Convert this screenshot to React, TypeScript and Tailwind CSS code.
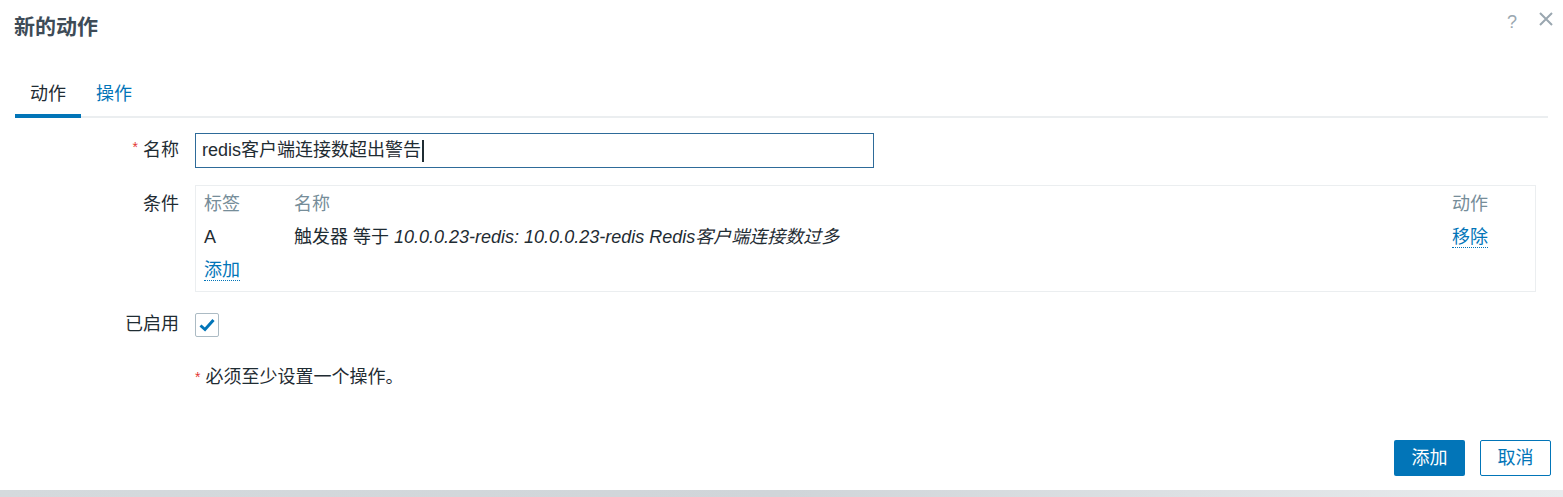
import React from 'react'

const font = { fontFamily: '"Liberation Sans", "Noto Sans CJK SC", sans-serif' }

function Label({ children, required }: { children: React.ReactNode; required?: boolean }) {
  return (
    <div className="w-[195px] shrink-0 pr-[16px] text-right text-[18px] text-[#1f2c33]">
      {required && <span className="mr-[5px] text-[14px] text-[#e33734] align-top">*</span>}
      {children}
    </div>
  )
}

export default function App() {
  return (
    <div style={font} className="flex h-[497px] w-[1563px] flex-col bg-white text-[#1f2c33]">
      {/* Header */}
      <div className="flex items-start justify-between pl-[14px] pr-[10px] pt-[12px]">
        <h1 className="text-[21px] font-bold leading-[30px] text-[#3e4b57]">新的动作</h1>
        <div className="flex items-center gap-[22px] text-[#9aa7b0]">
          <span className="pt-[6px] text-[18px] leading-[4px]">?</span>
          <svg width="14" height="14" viewBox="0 0 14 14">
            <path d="M1 1 L13 13 M13 1 L1 13" stroke="#9aa7b0" strokeWidth="2" />
          </svg>
        </div>
      </div>

      {/* Tabs */}
      <div className="mx-[15px] mt-[40px] flex border-b-2 border-[#ebeef0]">
        <div className="relative -mb-[2px] w-[66px] border-b-4 border-[#0275b8] pb-[8px] text-center text-[18px] leading-[24px] text-[#1f2c33]">
          动作
        </div>
        <div className="ml-[15px] text-[18px] leading-[24px] text-[#0275b8]">操作</div>
      </div>

      {/* Form */}
      <div className="mt-[15px] flex flex-col">
        <div className="flex items-center">
          <Label required>名称</Label>
          <div className="flex h-[35px] w-[679px] items-center border border-[#2e6b99] px-[6px] text-[18px]">
            redis客户端连接数超出警告
            <span className="ml-[1px] inline-block h-[22px] w-[2px] bg-[#1f2c33]" />
          </div>
        </div>

        <div className="mt-[17px] flex items-start">
          <div className="pt-[6px]">
            <Label>条件</Label>
          </div>
          <div className="h-[107px] w-[1341px] border border-[#ebeef0] px-[8px] pt-[5px] text-[18px]">
            <div className="flex leading-[26px] text-[#768d99]">
              <div className="w-[90px]">标签</div>
              <div className="flex-1">名称</div>
              <div className="w-[75px]">动作</div>
            </div>
            <div className="mt-[7px] flex leading-[26px]">
              <div className="w-[90px]">A</div>
              <div className="flex-1">
                触发器 等于 <i>10.0.0.23-redis: 10.0.0.23-redis Redis客户端连接数过多</i>
              </div>
              <div className="w-[75px]">
                <span className="border-b border-dotted border-[#0275b8] text-[#0275b8]">移除</span>
              </div>
            </div>
            <div className="mt-[7px] leading-[26px]">
              <span className="border-b border-dotted border-[#0275b8] text-[#0275b8]">添加</span>
            </div>
          </div>
        </div>

        <div className="mt-[19px] flex items-center">
          <Label>已启用</Label>
          <div className="flex h-[24px] w-[24px] items-center justify-center rounded-[2px] border border-[#acbbc4]">
            <svg width="18" height="16" viewBox="0 0 18 16">
              <path d="M2.5 8.5 L7 12.5 L15.5 3" fill="none" stroke="#0275b8" strokeWidth="3" />
            </svg>
          </div>
        </div>

        <div className="ml-[195px] mt-[26px] text-[18px] leading-[26px]">
          <span className="mr-[5px] text-[14px] text-[#e33734] align-top">*</span>
          必须至少设置一个操作。
        </div>
      </div>

      {/* Footer buttons */}
      <div className="mt-auto flex justify-end gap-[15px] pb-[14px] pr-[12px]">
        <button className="h-[36px] w-[71px] rounded-[2px] bg-[#0275b8] text-[18px] text-white">添加</button>
        <button className="h-[36px] w-[71px] rounded-[2px] border border-[#0275b8] bg-white text-[18px] text-[#0275b8]">
          取消
        </button>
      </div>
      <div className="h-[7px] bg-gradient-to-r from-[#d5dadd] via-[#d0d5d9] to-[#e9ecee]" />
    </div>
  )
}
